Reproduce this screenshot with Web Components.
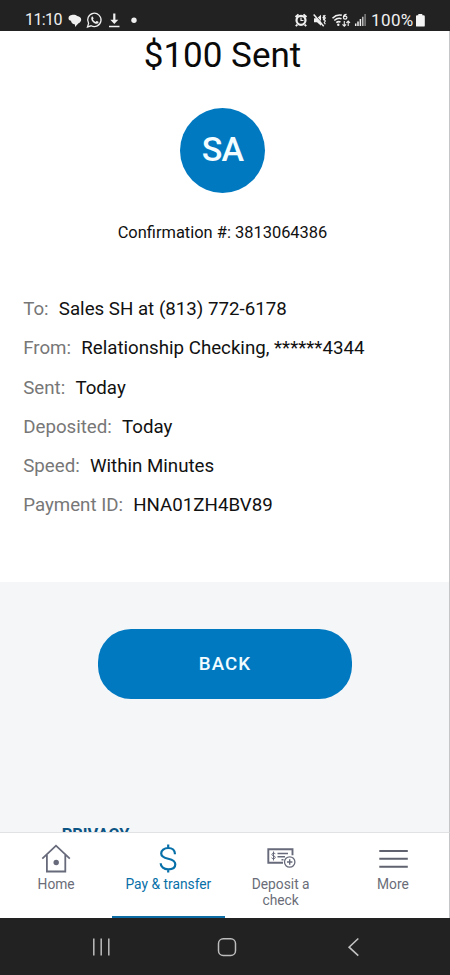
<!DOCTYPE html>
<html lang="en">
<head>
<meta charset="utf-8">
<title>Payment sent</title>
<style>
html,body{margin:0;height:100%;background:#fff}
body{font-family:Roboto,"Liberation Sans",sans-serif;color:#111;overflow:hidden}
</style>
</head>
<body>
<payment-screen></payment-screen>
<script>
const define=(name,html)=>customElements.define(name,class extends HTMLElement{
  constructor(){super();this.attachShadow({mode:'open'}).innerHTML=html;}
});

define('status-bar',`
<style>
:host{display:flex;height:31px;background:#222;color:#f0f0f0;box-sizing:border-box;padding:10px 24px 0 25px;justify-content:space-between}
.l,.r{display:flex;height:20px;align-items:center}
.t{font-size:16px;line-height:20px;letter-spacing:-.6px;width:43px;white-space:nowrap}
.p{font-size:17px;line-height:20px;letter-spacing:.4px;width:45px;white-space:nowrap}
svg{display:block}
</style>
<div class="l"><span class="t">11:10</span>
<svg width="72" height="20" viewBox="68 10 72 20" fill="#f0f0f0">
<path d="M68.500 18.500c0-3 2.600-3.700 5-3.700 1.500 0 2.800.4 3.700 1.200 2.300.4 4 1.700 4 3.700 0 1.600-1.200 2.800-2.700 3.500L75 27v-2.600c-2.300-.2-4-1.700-4-3.600-1.500-.4-2.500-1.200-2.500-2.300z"/>
<path d="M87.500 26.900l1.100-3.500a6.700 6.700 0 1 1 2.500 2.400z" fill="none" stroke="#f0f0f0" stroke-width="1.300"/>
<path d="M91.700 16.700c.8-.5 1.300 0 1.800 1.500.1.600-.5.900-.6 1.200.7 1.300 1.500 2 2.800 2.500.5-.3.800-1 1.300-.8 1.400.6 1.800.9 1.300 1.900-1.900 2.700-8.900-2.300-6.600-6.300z"/>
<path d="M113.200 13.500h2.200v6.300h2.900l-4 4.300-4-4.300h2.900zM109 25.800h10.500v1.400H109z"/>
<circle cx="134" cy="20.200" r="2.700"/>
</svg></div>
<div class="r">
<svg width="77" height="20" viewBox="293 10 77 20" fill="none" stroke="#f0f0f0" stroke-width="1.200">
<circle cx="300" cy="20.300" r="4.500" fill="#222" stroke-width="2.200"/><path d="M294.500 17l3-2.600M305.500 17l-3-2.600M296.300 24.600l-1.500 1.600M303.700 24.600l1.500 1.600" stroke-width="1.900"/><path d="M300 17.500v3h2.500"/>
<path d="M313 18.300h3l4-3.500v11l-4-3.500h-3z" fill="#f0f0f0" stroke="none"/><path d="M313.600 14.300l9.500 11" stroke="#222" stroke-width="1"/><path d="M312.700 14.600l10 11.700" stroke-width="1.500"/><path d="M322 15.500l1.200 1-1.200 1.200 1.200 1.200-1 1.200M324.300 15l-1 1.500 1 1.500-1 1.500 1 1.500-1 1.500 1 1.700"/>
<path d="M331.500 18.200q4.300-4.300 9.300-2.900M333.300 20.500q3.600-3.300 7.200-1.700M335.300 22.700q2-1.900 4.200-.6" stroke-width="1.600"/><circle cx="337.300" cy="24.700" r="1.200" fill="#f0f0f0" stroke="none"/><path d="M345.600 14.300q-3.200.2-3.200 3.200c0 2.200 3.500 2.200 3.500 0 0-1.700-2.500-2-3.200-.5"/>
<path d="M343.300 21v5m-1.800-1.700l1.800 1.900 1.800-1.900M347.200 26v-4.800m-1.800 1.700l1.800-1.900 1.800 1.900" stroke-width="1.100"/>
<path d="M354.700 26v-2.500M357 26v-4.600M359.400 26v-7" stroke-width="1.500"/><path d="M361.800 26v-9.200" stroke-width="1.400" stroke="#ccc"/><path d="M364.100 26V14" stroke-width="1.400" stroke="#888"/>
</svg><span class="p">100%</span>
<svg width="10" height="20" viewBox="416 10 10 20" fill="#f4f4f4"><path d="M418.300 14h4v1.300h1.200q1.300 0 1.300 1.200v8.900q0 1.200-1.200 1.200h-6.600q-1.200 0-1.200-1.200v-8.900q0-1.200 1.200-1.200h1.300z"/></svg>
</div>`);

define('user-avatar',`
<style>:host{display:grid;place-items:center;width:85px;height:85px;border-radius:50%;background:#0079c1;color:#f3fcff;font-size:34px;font-weight:500;line-height:40px;letter-spacing:-.9px;box-sizing:border-box;padding-bottom:3px}</style>
<span><slot></slot></span>`);

define('detail-row',`
<style>:host{display:flex;gap:10.200px;height:39.260px;line-height:39.260px;font-size:18.720px;white-space:nowrap}
.k{color:#777}.v{color:#111}</style>
<span class="k"><slot name="label"></slot></span><span class="v"><slot></slot></span>`);

define('pill-button',`
<style>:host{display:block}
button{display:block;width:254px;height:70px;border:0;border-radius:33px;background:#0079c1;color:#f3fcff;font:500 18.700px/70px Roboto,sans-serif;letter-spacing:1.100px;padding:0}</style>
<button><slot></slot></button>`);

define('nav-tab',`
<style>:host{display:flex;flex:1;flex-direction:column;align-items:center;box-sizing:border-box;padding-top:9px;border-bottom:2px solid transparent;color:#6a6d78;font-size:13.800px;line-height:16.300px;text-align:center}
:host([active]){color:#0870a8;border-color:#0b6ca6}
.i{height:34px}.w{max-width:90px}</style>
<div class="i"><slot name="icon"></slot></div><div class="w"><slot></slot></div>`);

define('tab-bar',`
<style>:host{display:flex;height:86px;box-sizing:border-box;background:#fff;border-top:1px solid #e1e2e4}svg{display:block}</style>
<nav-tab><svg slot="icon" width="32" height="34" viewBox="0 0 32 34" fill="none" stroke="#676a7a" stroke-width="1.800"><path d="M2.300 16.700L16 3.700l13.800 13M6.900 13v16.500h18.400V13"/><circle cx="16.200" cy="20.500" r="2.700" fill="#676a7a" stroke="none"/></svg>Home</nav-tab>
<nav-tab active><svg slot="icon" width="32" height="34" viewBox="0 0 32 34" fill="none" stroke="#0870a8" stroke-width="2.200"><path d="M16.200 2.500v4M16.200 26.500v4M23 12.300C23 8.300 20.300 6 16.200 6S9.200 8.400 9.200 11.400C9.200 14.700 12 15.700 16.200 16.700S23.300 18.900 23.300 22.200 20.500 27.300 16.200 27.300 8.700 25 8.700 21.200"/></svg>Pay &amp; transfer</nav-tab>
<nav-tab><svg slot="icon" width="32" height="34" viewBox="0 0 32 34" fill="none" stroke="#676a7a"><path d="M18 20.700H3.300V7.200H27.500v6" stroke-width="1.900"/><path d="M12.500 11.500h10.500M12.500 14.700h7.500M16.500 17.700h2" stroke-width="1.500"/><path d="M8.500 9.500v9M10.300 12.100q-.3-1-1.700-1t-1.700 1.300q0 1.100 1.700 1.500t1.700 1.500-1.700 1.300-1.900-1.100" stroke-width="1"/><circle cx="24.700" cy="20" r="5.200" fill="#fff" stroke-width="1.300"/><path d="M24.700 17.300v5.400M22 20h5.400" stroke-width="1.400"/></svg>Deposit a check</nav-tab>
<nav-tab><svg slot="icon" width="32" height="34" viewBox="0 0 32 34" stroke="#60636f" stroke-width="2"><path d="M2.300 9h28.500M2.300 16.700h28.500M2.300 24.700h28.500"/></svg>More</nav-tab>`);

define('system-nav',`
<style>:host{display:flex;height:57px;background:#222;justify-content:space-between;align-items:center;padding:1px 86px 0 88px;box-sizing:border-box}</style>
<svg width="26" height="26" viewBox="88 935 26 26" stroke="#bdbdbd" stroke-width="1.500"><path d="M93.800 939.500v17M101.200 939.500v17M108.800 939.500v17"/></svg>
<svg width="24" height="26" viewBox="215 935 24 26" fill="none" stroke="#bdbdbd" stroke-width="1.500"><rect x="218.500" y="939.800" width="17" height="16.600" rx="4.700"/></svg>
<svg width="24" height="26" viewBox="340 935 24 26" fill="none" stroke="#c2c2c2" stroke-width="1.600"><path d="M358.300 939.500l-9.200 8.700 9.200 8.500"/></svg>`);

define('payment-screen',`
<style>
:host{display:flex;flex-direction:column;width:450px;height:975px}
main{flex:1;min-height:0;overflow:hidden;background:#f4f6f8;display:flex;flex-direction:column;border-right:1px solid #c5c6c8}
.card{flex:none;height:551px;background:#fff;display:flex;flex-direction:column;box-sizing:border-box;padding-top:4px}
h1{margin:0;font-size:35px;font-weight:400;line-height:41px;text-align:center;color:#0a0a0a;width:445px}
user-avatar{margin:31.500px 0 0 180px}
.c{width:445px;text-align:center;font-size:16.450px;line-height:20px;margin-top:30.500px}
.d{padding:47px 0 0 23.200px}
.a{flex:none;display:flex;flex-direction:column;align-items:center;padding:47px 0 0 1px}
.pr{align-self:flex-start;margin:126px 0 0 60.700px;font-size:16.400px;line-height:20px;font-weight:700;color:#0b5484}
tab-bar{border-right:1px solid #c5c6c8}
</style>
<status-bar></status-bar>
<main><section class="card">
<h1>$100 Sent</h1><user-avatar>SA</user-avatar><div class="c">Confirmation #: 3813064386</div>
<div class="d">
<detail-row><span slot="label">To:</span>Sales SH at (813) 772-6178</detail-row>
<detail-row><span slot="label">From:</span>Relationship Checking, ******4344</detail-row>
<detail-row><span slot="label">Sent:</span>Today</detail-row>
<detail-row><span slot="label">Deposited:</span>Today</detail-row>
<detail-row><span slot="label">Speed:</span>Within Minutes</detail-row>
<detail-row><span slot="label">Payment ID:</span>HNA01ZH4BV89</detail-row>
</div></section>
<section class="a"><pill-button>BACK</pill-button><div class="pr">PRIVACY</div></section></main>
<tab-bar></tab-bar><system-nav></system-nav>`);
</script>
</body>
</html>
